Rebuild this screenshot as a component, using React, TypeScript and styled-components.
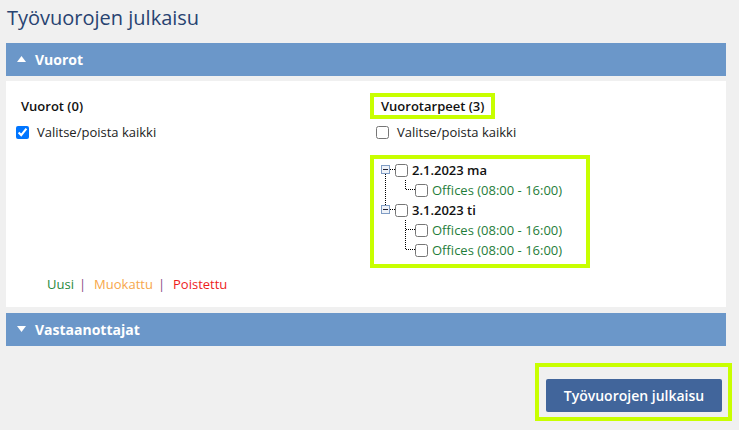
import React from 'react';
import styled, { createGlobalStyle } from 'styled-components';

// グローバルスタイル
const GlobalStyle = createGlobalStyle`
    body {
        margin: 0;
        background: #f0f0f0;
        font-family: "Open Sans", "Liberation Sans", sans-serif;
        font-size: 13px;
        color: #222;
    }
`;

const LIME = '#c8ff00';

interface TreeNode {
    label: string;
    children: string[];
}

// ツリーのデータ
const nodes: TreeNode[] = [
    { label: '2.1.2023 ma', children: ['Offices (08:00 - 16:00)'] },
    { label: '3.1.2023 ti', children: ['Offices (08:00 - 16:00)', 'Offices (08:00 - 16:00)'] },
];

// 見出しバーの三角
const Arrow = (props: { open: boolean }) => (
    <svg width="9" height="6" viewBox="0 0 9 6">
        {props.open
            ? <polygon points="0,6 4.5,0 9,6" fill="#fff" />
            : <polygon points="0,0 4.5,6 9,0" fill="#fff" />}
    </svg>
);

// ルート行の接続線
const RootLines = (props: { last: boolean }) => (
    <svg width="16" height="20" viewBox="0 0 16 20" shapeRendering="crispEdges">
        <g stroke="#000" strokeWidth="1" strokeDasharray="1 1" fill="none">
            {!props.last && <line x1="6.5" y1="14" x2="6.5" y2="20" />}
            {props.last && <line x1="6.5" y1="0" x2="6.5" y2="5" />}
            <line x1="11" y1="9.5" x2="16" y2="9.5" />
        </g>
        <rect x="2.5" y="5.5" width="8" height="8" fill="#eef2f8" stroke="#7f9cc4" />
        <line x1="4" y1="9.5" x2="9" y2="9.5" stroke="#223" />
    </svg>
);

// 子行の接続線
const ChildLines = (props: { parentLast: boolean; last: boolean }) => (
    <svg width="36" height="20" viewBox="0 0 36 20" shapeRendering="crispEdges">
        <g stroke="#000" strokeWidth="1" strokeDasharray="1 1" fill="none">
            {!props.parentLast && <line x1="6.5" y1="0" x2="6.5" y2="20" />}
            <line x1="26.5" y1="0" x2="26.5" y2={props.last ? 10 : 20} />
            <line x1="27" y1="9.5" x2="36" y2="9.5" />
        </g>
    </svg>
);

const AppPresenter = (props: { className?: string }) => {
    const [allShifts, setAllShifts] = React.useState(true);
    const [allNeeds, setAllNeeds] = React.useState(false);

    return (
        <div className={props.className}>
            <h1 className="title">Työvuorojen julkaisu</h1>

            <SectionBar>
                <Arrow open={true} />
                <span>Vuorot</span>
            </SectionBar>

            <Panel>
                <Columns>
                    <div>
                        <Heading>Vuorot (0)</Heading>
                        <CheckRow>
                            <input type="checkbox" checked={allShifts} onChange={(e) => setAllShifts(e.target.checked)} />
                            <span>Valitse/poista kaikki</span>
                        </CheckRow>
                    </div>
                    <div>
                        <Heading $marked>Vuorotarpeet (3)</Heading>
                        <CheckRow>
                            <input type="checkbox" checked={allNeeds} onChange={(e) => setAllNeeds(e.target.checked)} />
                            <span>Valitse/poista kaikki</span>
                        </CheckRow>
                        <TreeBox>
                            {nodes.map((node, i) => {
                                const lastRoot = i === nodes.length - 1;
                                return (
                                    <React.Fragment key={node.label}>
                                        <TreeRow>
                                            <RootLines last={lastRoot} />
                                            <input type="checkbox" />
                                            <TreeLabel>{node.label}</TreeLabel>
                                        </TreeRow>
                                        {node.children.map((child, j) => (
                                            <TreeRow key={j}>
                                                <ChildLines parentLast={lastRoot} last={j === node.children.length - 1} />
                                                <input type="checkbox" />
                                                <TreeLabel $child>{child}</TreeLabel>
                                            </TreeRow>
                                        ))}
                                    </React.Fragment>
                                );
                            })}
                        </TreeBox>
                    </div>
                </Columns>

                <Legend>
                    <LegendItem $color="#1f8a3c">Uusi</LegendItem>
                    <Pipe>|</Pipe>
                    <LegendItem $color="#f7a64a">Muokattu</LegendItem>
                    <Pipe>|</Pipe>
                    <LegendItem $color="#ee1c1c">Poistettu</LegendItem>
                </Legend>
            </Panel>

            <SectionBar $gap={6}>
                <Arrow open={false} />
                <span>Vastaanottajat</span>
            </SectionBar>

            <ButtonRow>
                <ButtonFrame>
                    <PublishButton>Työvuorojen julkaisu</PublishButton>
                </ButtonFrame>
            </ButtonRow>
        </div>
    );
};

const SectionBar = styled.div<{ $gap?: number }>`
    display: flex;
    align-items: center;
    gap: 9px;
    height: 33px;
    margin-top: ${(p) => p.$gap ?? 0}px;
    padding-left: 11px;
    background: #6b97c9;
    color: #fff;
    font-size: 14px;
    font-weight: 700;
    svg {
        margin-top: -1px;
    }
`;

const Panel = styled.div`
    box-sizing: border-box;
    height: 226px;
    margin-top: 5px;
    padding: 12px 10px 0;
    background: #fff;
`;

const Columns = styled.div`
    display: grid;
    grid-template-columns: 360px 1fr;
`;

const Heading = styled.div<{ $marked?: boolean }>`
    display: inline-block;
    height: 18px;
    margin-left: -6px;
    padding: 0 7px 0 7px;
    border: 4px solid ${(p) => (p.$marked ? LIME : 'transparent')};
    font-weight: 600;
    line-height: 18px;
    color: #111;
`;

const CheckRow = styled.label`
    display: flex;
    align-items: center;
    gap: 8px;
    height: 18px;
    margin-top: 4px;
    color: #222;
    input {
        width: 13px;
        height: 13px;
        margin: 0;
    }
`;

const TreeBox = styled.div`
    width: 207px;
    margin: 14px 0 0 -6px;
    padding: 1px 0 4px 5px;
    border: 4px solid ${LIME};
`;

const TreeRow = styled.div`
    display: flex;
    align-items: center;
    height: 20px;
    input {
        width: 13px;
        height: 13px;
        margin: 0;
    }
`;

const TreeLabel = styled.span<{ $child?: boolean }>`
    margin-left: 4px;
    white-space: nowrap;
    font-weight: ${(p) => (p.$child ? 400 : 600)};
    color: ${(p) => (p.$child ? '#1f7d3a' : '#111')};
`;

const Legend = styled.div`
    display: flex;
    align-items: center;
    margin-top: 7px;
    padding-left: 31px;
    line-height: 18px;
`;

const LegendItem = styled.span<{ $color: string }>`
    color: ${(p) => p.$color};
`;

const Pipe = styled.span`
    margin: 0 8px 0 5px;
    color: #8a4a86;
`;

const ButtonRow = styled.div`
    display: flex;
    justify-content: flex-end;
    margin: 17px -6px 0 0;
`;

const ButtonFrame = styled.div`
    padding: 12px 6px 5px 7px;
    border: 4px solid ${LIME};
`;

const PublishButton = styled.button`
    width: 176px;
    height: 33px;
    border: none;
    border-radius: 2px;
    background: #41659b;
    color: #fff;
    font-family: "Open Sans", "Liberation Sans", sans-serif;
    font-size: 14px;
    font-weight: 600;
    cursor: pointer;
`;

const StyledApp = styled(AppPresenter)`
    width: 720px;
    padding-left: 6px;
    .title {
        margin: 0;
        height: 43px;
        padding: 4px 0 0 1px;
        box-sizing: border-box;
        font-size: 20px;
        font-weight: 400;
        line-height: 27px;
        color: #284371;
    }
`;

export default function App() {
    return (
        <>
            <GlobalStyle />
            <StyledApp />
        </>
    );
}
